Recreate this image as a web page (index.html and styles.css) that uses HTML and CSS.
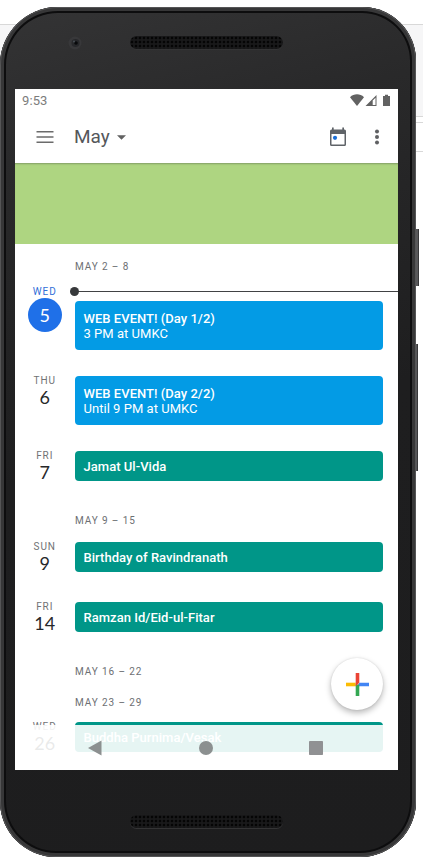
FILE: index.html
```html
<!DOCTYPE html>
<html lang="en">
<head>
<meta charset="utf-8">
<title>Calendar</title>
<link rel="stylesheet" href="styles.css">
</head>
<body>
<div class="backdrop"></div>
<div class="side-button power"></div>
<div class="side-button volume"></div>
<div class="phone">
  <div class="bezel top">
    <svg class="camera" width="16" height="16" viewBox="0 0 16 16"><circle cx="8" cy="8" r="6.5" fill="#38383a"/><circle cx="8.5" cy="8" r="4" fill="#27282b"/><circle cx="9" cy="8" r="1.8" fill="#08090b"/><circle cx="7" cy="6.5" r="1" fill="#484f55"/></svg>
    <div class="speaker"></div>
  </div>
  <main class="screen">
    <div class="status">
      <span class="time">9:53</span>
      <svg width="42" height="14" viewBox="0 0 42 14" fill="#626262"><path d="M0 3.200C4-.6 10-.6 14 3.200L7 12Z"/><path fill-rule="evenodd" d="M15.500 12 26.500 1v11ZM22.700 6.500V11h2.800V3.700Z"/><path d="M35 .8h3v1.200h2V12h-7V2h2Z"/></svg>
    </div>
    <header class="toolbar">
      <svg class="menu" width="18" height="14" viewBox="0 0 18 14" stroke="#6b6b6b" stroke-width="1.5"><path d="M.5 1.800h17M.5 7h17M.5 12.200h17"/></svg>
      <h1>May</h1>
      <svg class="caret" width="9" height="5" viewBox="0 0 9 5"><path d="M0 .3h9L4.500 4.700Z" fill="#616161"/></svg>
      <svg class="today" width="18" height="20" viewBox="0 0 18 20"><path fill="#5f6368" fill-rule="evenodd" d="M3 .5h1.700v2h8.600v-2H15v2h.5q1.500 0 1.500 1.500v13.500q0 1.500-1.500 1.500h-13Q1 19 1 17.500V4q0-1.500 1.500-1.500H3ZM2.500 7v10.400h13V7Z"/><circle cx="6" cy="10.800" r="2.100" fill="#1b6fd8"/></svg>
      <svg class="more" width="6" height="18" viewBox="0 0 6 18" fill="#5f6063"><circle cx="3" cy="3.500" r="2"/><circle cx="3" cy="9" r="2"/><circle cx="3" cy="14.500" r="2"/></svg>
    </header>
    <div class="banner"></div>
    <div class="agenda">
      <div class="week first">MAY 2 – 8</div>
      <div class="day current">
        <div class="date"><span class="name">WED</span><span class="num">5</span></div>
        <div class="event blue"><b>WEB EVENT! (Day 1/2)</b><span>3 PM at UMKC</span></div>
        <div class="now"></div>
      </div>
      <div class="day">
        <div class="date"><span class="name">THU</span><span class="num">6</span></div>
        <div class="event blue"><b>WEB EVENT! (Day 2/2)</b><span>Until 9 PM at UMKC</span></div>
      </div>
      <div class="day short">
        <div class="date"><span class="name">FRI</span><span class="num">7</span></div>
        <div class="event"><b>Jamat Ul-Vida</b></div>
      </div>
      <div class="week">MAY 9 – 15</div>
      <div class="day short">
        <div class="date"><span class="name">SUN</span><span class="num">9</span></div>
        <div class="event"><b>Birthday of Ravindranath</b></div>
      </div>
      <div class="day short">
        <div class="date"><span class="name">FRI</span><span class="num">14</span></div>
        <div class="event"><b>Ramzan Id/Eid-ul-Fitar</b></div>
      </div>
      <div class="week">MAY 16 – 22</div>
      <div class="week last">MAY 23 – 29</div>
      <div class="day short">
        <div class="date"><span class="name">WED</span><span class="num">26</span></div>
        <div class="event"><b>Buddha Purnima/Vesak</b></div>
      </div>
    </div>
    <nav class="navbar">
      <svg width="14" height="16" viewBox="0 0 14 16"><path d="M0 8 13.500 .5v15Z" fill="#8c9090"/></svg>
      <svg width="14" height="14" viewBox="0 0 14 14"><circle cx="7" cy="7" r="7" fill="#8c9090"/></svg>
      <svg width="14" height="14" viewBox="0 0 14 14"><rect width="14" height="14" rx=".8" fill="#909193"/></svg>
    </nav>
    <div class="fab"><svg width="23" height="23" viewBox="0 0 23 23"><path fill="#fbbc04" d="M0 9.700h9.700v3.600H0Z"/><path fill="#4285f4" d="M13.300 9.700H23v3.600H11.500Z"/><path fill="#34a853" d="M9.700 11.500h3.600V23H9.700Z"/><path fill="#ea4335" d="M9.700 0h3.600v9.700l-3.600 3.600Z"/></svg></div>
  </main>
  <div class="bezel bottom"><div class="speaker"></div></div>
</div>
</body>
</html>
```

FILE: styles.css
```css
* { box-sizing: border-box; }
body {
  margin: 0;
  width: 423px;
  height: 867px;
  overflow: hidden;
  position: relative;
  background: #fff;
  font-family: Roboto, sans-serif;
}
body::before { content: ""; display: table; }
svg { display: block; flex: none; }
.backdrop {
  position: absolute;
  top: 24px;
  left: 0;
  width: 423px;
  height: 128px;
  border-top: 1px solid #d8d8d8;
  border-bottom: 1px solid #d8d8d8;
  background: linear-gradient(#f6f6f7 91px, #d8d8d8 91px 92px, #fff 92px 97px, #d8d8d8 97px 98px, #fff 98px);
}
.side-button {
  position: absolute;
  left: 414px;
  background: #58585a;
  border-right: 1px solid #38383a;
}
.power { top: 229px; width: 5px; height: 57px; }
.volume { top: 344px; width: 4px; height: 127px; }
.phone {
  position: relative;
  width: 416px;
  height: 850px;
  margin-top: 7px;
  overflow: hidden;
  display: flex;
  flex-direction: column;
  border-radius: 58px 54px 56px 56px;
  background: linear-gradient(165deg, #343435 0, #29292a 18%, #1e1e1f 50%, #1d1d1e 100%);
  box-shadow: inset 0 0 0 1px #555556, inset 0 0 0 4px #373738, inset 0 0 0 6px #0d0d0e;
}
.bezel { display: flex; position: relative; }
.bezel.top { height: 82px; padding: 29px 0 0 130px; }
.bezel.bottom { flex: 1; padding: 45px 0 0 130px; }
.camera { position: absolute; left: 67px; top: 28px; }
.speaker {
  width: 153px;
  height: 13px;
  border-radius: 7px;
  background: radial-gradient(circle, #050505 35%, #19191a 60%) 0 0 / 4px 4px;
  box-shadow: 0 1px 0 #343435;
}
.screen {
  position: relative;
  width: 383px;
  height: 681px;
  margin-left: 15px;
  overflow: hidden;
  background: #fff;
}
.status {
  height: 23px;
  display: flex;
  align-items: center;
  justify-content: space-between;
  padding: 0 6px 0 7px;
}
.time { font-size: 13px; letter-spacing: .1px; color: #7c7c7c; }
.toolbar {
  height: 51px;
  display: flex;
  align-items: center;
  padding: 0 18px 1px 21px;
}
.toolbar h1 {
  margin: 0 0 0 20px;
  width: 36px;
  font-size: 19px;
  line-height: 24px;
  font-weight: 400;
  color: #55575b;
}
.caret { margin-left: 7px; }
.today { margin-left: auto; }
.more { margin-left: 27px; }
.banner {
  height: 81px;
  background: #aed581;
  box-shadow: inset 0 2px 2px -1px #829c65;
}
.agenda { height: 526px; }
.week {
  height: 25px;
  margin: -6px 0 11.5px 60px;
  padding-top: 9px;
  line-height: 13px;
  font-size: 10px;
  letter-spacing: .9px;
  color: #6d6f73;
}
.week.first { margin-top: 7px; margin-bottom: 25px; }
.week.last { margin-top: 0; margin-bottom: 10.5px; }
.week:has(+ .last) { margin-bottom: 6px; }
.day {
  display: flex;
  position: relative;
  height: 49px;
  margin-bottom: 26px;
}
.day.short { height: 30px; margin-bottom: 30px; }
.date {
  width: 59.5px;
  display: flex;
  flex-direction: column;
  align-items: center;
}
.name {
  height: 11px;
  margin-top: -1px;
  line-height: 11px;
  font-size: 10px;
  letter-spacing: .9px;
  color: #707275;
}
.num {
  flex: none;
  margin-top: 1px;
  line-height: 21px;
  font-family: Lato, sans-serif;
  font-size: 18px;
  color: #27282a;
}
.current .name { margin-top: -15px; color: #326fd8; }
.current .num {
  width: 34px;
  height: 34px;
  margin-top: 1px;
  border-radius: 50%;
  background: #1f70e8;
  color: #fff;
  line-height: 34px;
  text-align: center;
}
.event {
  width: 308.5px;
  padding: 10px 9px 0;
  border-radius: 4px;
  background: #009688;
  color: #fff;
  font-size: 13px;
  line-height: 15px;
  letter-spacing: .03px;
  display: flex;
  flex-direction: column;
}
.event.blue { background: #039be5; }
.event b { font-weight: 500; }
.short .event { padding-top: 8px; }
.now {
  position: absolute;
  left: 59px;
  right: 0;
  top: -10px;
  height: 1px;
  background: #414244;
}
.now::before {
  content: "";
  position: absolute;
  left: -4px;
  top: -4px;
  width: 9px;
  height: 9px;
  border-radius: 50%;
  background: #37393b;
}
.navbar {
  position: absolute;
  left: 0;
  bottom: 0;
  width: 383px;
  height: 45px;
  display: flex;
  align-items: center;
  justify-content: space-between;
  padding: 0 75px 0 73px;
  background: rgba(255, 255, 255, .9);
}
.fab {
  position: absolute;
  right: 15px;
  bottom: 60px;
  width: 52px;
  height: 52px;
  display: flex;
  align-items: center;
  justify-content: center;
  border-radius: 50%;
  background: #fff;
  box-shadow: 0 3px 6px rgba(0, 0, 0, .28), 0 0 2px rgba(0, 0, 0, .12);
}
```
